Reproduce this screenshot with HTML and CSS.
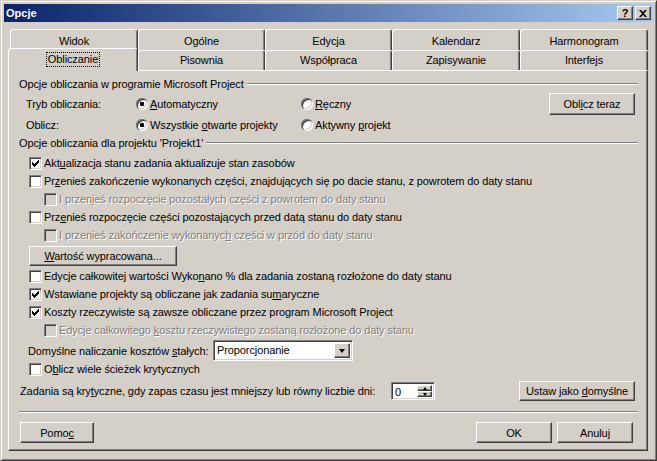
FILE: index.html
```html
<!DOCTYPE html>
<html lang="pl">
<head>
<meta charset="utf-8">
<title>Opcje</title>
<link rel="stylesheet" href="styles.css">
</head>
<body>
<div class="window">
  <div class="titlebar">
    <span class="title">Opcje</span>
    <div class="capbtns">
      <span class="capbtn help">?</span>
      <span class="capbtn close"><svg width="8" height="7" viewBox="0 0 8 7"><path d="M0 0h2l2 2 2-2h2L5 3.5 8 7H6L4 5 2 7H0l3-3.5z" fill="#000"/></svg></span>
    </div>
  </div>
  <div class="client">
    <div class="tabs">
      <div class="tabrow back">
        <div class="tab w128">Widok</div>
        <div class="tab w127">Ogólne</div>
        <div class="tab w127">Edycja</div>
        <div class="tab w128">Kalendarz</div>
        <div class="tab w128">Harmonogram</div>
      </div>
      <div class="tabrow front">
        <div class="tab sel"><span class="focus">Obliczanie</span></div>
        <div class="tab w127">Pisownia</div>
        <div class="tab w127">Współpraca</div>
        <div class="tab w128">Zapisywanie</div>
        <div class="tab w128">Interfejs</div>
      </div>
    </div>
    <div class="panel">
      <div class="group"><span>Opcje obliczania w programie Microsoft Project</span><span class="rule"></span></div>
      <div class="row r-tryb">
        <span class="lbl">Tryb obliczania:</span>
        <span class="opt"><span class="radio on"></span><span class="otext"><u>A</u>utomatyczny</span></span>
        <span class="opt"><span class="radio"></span><span class="otext"><u>R</u>ęczny</span></span>
        <span class="btn b-teraz"><span>Obl<u>i</u>cz teraz</span></span>
      </div>
      <div class="row r-oblicz">
        <span class="lbl">Oblicz:</span>
        <span class="opt"><span class="radio on"></span><span class="otext">Wszystkie <u>o</u>twarte projekty</span></span>
        <span class="opt"><span class="radio"></span><span class="otext">Aktywny <u>p</u>rojekt</span></span>
      </div>
      <div class="group g2"><span>Opcje obliczania dla projektu 'Projekt1'</span><span class="rule"></span></div>
      <div class="checks first">
        <div class="chk"><span class="box on"></span><span class="ctext">Akt<u>u</u>alizacja stanu zadania aktualizuje stan zasobów</span></div>
        <div class="chk"><span class="box"></span><span class="ctext">Pr<u>z</u>enieś zakończenie wykonanych części, znajdujących się po dacie stanu, z powrotem do daty stanu</span></div>
        <div class="chk sub dis"><span class="box"></span><span class="ctext">I przen<u>i</u>eś rozpoczęcie pozostałych części z powrotem do daty stanu</span></div>
        <div class="chk"><span class="box"></span><span class="ctext">Prz<u>e</u>nieś rozpoczęcie części pozostających przed datą stanu do daty stanu</span></div>
        <div class="chk sub dis"><span class="box"></span><span class="ctext">I przenieś zakończenie wykonanyc<u>h</u> części w przód do daty stanu</span></div>
      </div>
      <span class="btn b-wartosc"><span><u>W</u>artość wypracowana...</span></span>
      <div class="checks second">
        <div class="chk"><span class="box"></span><span class="ctext">Edycje całkowitej wartości Wyko<u>n</u>ano % dla zadania zostaną rozłożone do daty stanu</span></div>
        <div class="chk"><span class="box on"></span><span class="ctext">Wstawiane projekty są obliczane jak zadania su<u>m</u>aryczne</span></div>
        <div class="chk"><span class="box on"></span><span class="ctext">Koszty rzeczywiste są zawsze obliczane przez program Microsoft Project</span></div>
        <div class="chk sub dis"><span class="box"></span><span class="ctext">Edycje całkowitego <u>k</u>osztu rzeczywistego zostaną rozłożone do daty stanu</span></div>
      </div>
      <div class="row r-koszt">
        <span class="klbl">Domyślne naliczanie kosztów <u>s</u>tałych:</span>
        <span class="combo"><span class="ctxt">Proporcjonanie</span><span class="dropbtn"><span class="tri-down"></span></span></span>
      </div>
      <div class="chk wiele"><span class="box"></span><span class="ctext">O<u>b</u>licz wiele ścieżek krytycznych</span></div>
      <div class="row r-zadania">
        <span class="zlbl">Zadania są kry<u>t</u>yczne, gdy zapas czasu jest mniejszy lub równy liczbie dni:</span>
        <span class="spin"><span class="stxt">0</span><span class="sbtns"><span class="sbtn"><span class="tri-up-s"></span></span><span class="sbtn"><span class="tri-down-s"></span></span></span></span>
        <span class="btn b-ustaw"><span>Ustaw jako <u>d</u>omyślne</span></span>
      </div>
      <div class="sep"></div>
      <div class="row r-buttons">
        <span class="btn b-pomoc"><span>Pomo<u>c</u></span></span>
        <span class="btn b-ok"><span>OK</span></span>
        <span class="btn b-anuluj"><span>Anuluj</span></span>
      </div>
    </div>
  </div>
</div>
</body>
</html>
```
FILE: styles.css
```css
* { box-sizing: border-box; }
html, body { margin: 0; padding: 0; background: #D4D0C8; }
body {
  font-family: "Liberation Sans", Arial, sans-serif;
  font-size: 11px;
  letter-spacing: -0.1px;
  color: #000;
  line-height: 14px;
}
u { text-decoration: underline; text-underline-offset: 1px; }

.window {
  width: 657px;
  height: 461px;
  background: #D4D0C8;
  border: 1px solid;
  border-color: #D4D0C8 #404040 #404040 #D4D0C8;
  box-shadow: inset 1px 1px #fff, inset -1px -1px #808080;
  padding: 3px;
  display: flex;
  flex-direction: column;
}

.titlebar {
  height: 18px;
  background: linear-gradient(to right, #0A246A, #A6CAF0);
  display: flex;
  align-items: center;
  padding-left: 2px;
}
.title { color: #fff; font-weight: bold; letter-spacing: 0; flex: 1; }
.capbtns { display: flex; margin-right: 2px; }
.capbtn {
  width: 16px;
  height: 14px;
  background: #D4D0C8;
  border: 1px solid;
  border-color: #fff #404040 #404040 #fff;
  box-shadow: inset -1px -1px #808080;
  display: flex;
  align-items: center;
  justify-content: center;
  font-weight: bold;
  font-size: 11px;
  line-height: 12px;
  letter-spacing: 0;
}
.capbtn.help { margin-right: 2px; padding-bottom: 1px; }
.capbtn svg { display: block; }

.client {
  flex: 1;
  padding: 7px 5px 6px 4px;
  display: flex;
  flex-direction: column;
}

.tabrow { display: flex; }
.tabrow.back { height: 21px; padding-left: 2px; }
.tabrow.front { height: 20px; }
.tab {
  flex: none;
  border: 1px solid;
  border-bottom: none;
  border-color: #fff #404040 transparent #fff;
  box-shadow: inset -1px 0 #808080;
  border-radius: 3px 3px 0 0;
  text-align: center;
  background: #D4D0C8;
}
.back .tab { padding-top: 4px; }
.front .tab { padding-top: 2px; }
.w127 { width: 127px; }
.w128 { width: 128px; }
.tab.sel {
  width: 130px;
  margin-top: -2px;
  margin-bottom: -1px;
  padding-top: 3px;
  position: relative;
  z-index: 1;
}
.focus {
  display: inline-block;
  outline: 1px dotted #000;
  padding: 0 1px;
  line-height: 13px;
}

.panel {
  flex: 1;
  border: 1px solid;
  border-color: #fff #404040 #404040 #fff;
  box-shadow: inset -1px -1px #808080;
  padding: 6px 9px 0 10px;
  display: flex;
  flex-direction: column;
  align-items: stretch;
}

.group { display: flex; align-items: center; height: 14px; }
.group .rule {
  flex: 1;
  height: 2px;
  margin-left: 3px;
  border-top: 1px solid #808080;
  border-bottom: 1px solid #fff;
}
.group.g2 { margin-top: 1px; }

.row { display: flex; align-items: center; }
.r-tryb { height: 22px; margin-top: 2px; }
.r-oblicz { height: 20px; }
.lbl { width: 117px; padding-left: 7px; }
.opt { display: flex; align-items: center; width: 165px; }
.otext { margin-left: 2px; }
.radio {
  width: 12px;
  height: 12px;
  border-radius: 50%;
  background: #fff;
  box-shadow: inset 1px 1px #808080, inset 2px 2px #404040, inset -1px -1px #fff, inset -2px -2px #D4D0C8;
  display: flex;
  align-items: center;
  justify-content: center;
}
.radio.on::after {
  content: "";
  width: 4px;
  height: 4px;
  background: #000;
  border-radius: 1px;
}

.btn {
  display: flex;
  align-items: center;
  justify-content: center;
  background: #D4D0C8;
  border: 1px solid;
  border-color: #fff #404040 #404040 #fff;
  box-shadow: inset -1px -1px #808080;
  flex: none;
  white-space: nowrap;
}
.b-teraz { width: 86px; height: 22px; margin-left: auto; margin-right: 3px; }

.checks.first { margin-top: 4px; }
.checks.second { margin-top: 1px; }
.chk { display: flex; align-items: center; height: 18px; padding-left: 10px; }
.chk.sub { padding-left: 25px; }
.box {
  width: 13px;
  height: 13px;
  flex: none;
  background: #fff;
  border: 1px solid;
  border-color: #808080 #fff #fff #808080;
  box-shadow: inset 1px 1px #404040, inset -1px -1px #D4D0C8;
  display: flex;
  align-items: center;
  justify-content: center;
}
.box.on::after {
  content: "";
  width: 7px;
  height: 7px;
  background: no-repeat center/7px 7px url("data:image/svg+xml,%3Csvg xmlns='http://www.w3.org/2000/svg' width='7' height='7' viewBox='0 0 7 7'%3E%3Cpath d='M0 2h1v1h1v1h1V3h1V2h1V1h1V0h1v3H6v1H5v1H4v1H3v1H2V6H1V5H0z' fill='%23000'/%3E%3C/svg%3E");
}
.dis .box { background: #D4D0C8; }
.ctext { margin-left: 2px; white-space: nowrap; }
.dis .ctext { color: #808080; text-shadow: 1px 1px 0 #fff; }

.b-wartosc { width: 148px; height: 20px; margin-top: 2px; margin-left: 10px; align-self: flex-start; }

.r-koszt { height: 21px; margin-top: 1px; }
.klbl { width: 194px; padding-left: 9px; }
.combo {
  width: 140px;
  height: 21px;
  background: #fff;
  border: 1px solid;
  border-color: #808080 #fff #fff #808080;
  box-shadow: inset 1px 1px #404040, inset -1px -1px #D4D0C8;
  display: flex;
  align-items: stretch;
  padding: 2px;
}
.ctxt { flex: 1; padding-left: 1px; line-height: 15px; }
.dropbtn {
  width: 16px;
  background: #D4D0C8;
  border: 1px solid;
  border-color: #fff #404040 #404040 #fff;
  box-shadow: inset -1px -1px #808080;
  display: flex;
  align-items: center;
  justify-content: center;
}
.tri-down {
  width: 0; height: 0;
  border-left: 3.5px solid transparent;
  border-right: 3.5px solid transparent;
  border-top: 4px solid #000;
}

.chk.wiele { height: 16px; }

.r-zadania { height: 20px; margin-top: 4px; }
.zlbl { width: 372px; padding-left: 1px; white-space: nowrap; }
.spin {
  width: 44px;
  height: 18px;
  background: #fff;
  border: 1px solid;
  border-color: #808080 #fff #fff #808080;
  box-shadow: inset 1px 1px #404040, inset -1px -1px #D4D0C8;
  display: flex;
  padding: 2px;
}
.stxt { flex: 1; line-height: 14px; padding-left: 1px; }
.sbtns { width: 15px; display: flex; flex-direction: column; }
.sbtn {
  flex: 1;
  background: #D4D0C8;
  border: 1px solid;
  border-color: #fff #404040 #404040 #fff;
  box-shadow: inset -1px -1px #808080;
  display: flex;
  align-items: center;
  justify-content: center;
}
.tri-up-s {
  width: 0; height: 0;
  border-left: 2.5px solid transparent;
  border-right: 2.5px solid transparent;
  border-bottom: 3px solid #000;
}
.tri-down-s {
  width: 0; height: 0;
  border-left: 2.5px solid transparent;
  border-right: 2.5px solid transparent;
  border-top: 3px solid #000;
}
.b-ustaw { width: 116px; height: 20px; margin-left: auto; margin-right: 3px; }

.sep {
  height: 2px;
  margin-top: 10px;
  border-top: 1px solid #808080;
  border-bottom: 1px solid #fff;
}

.r-buttons { height: 21px; margin-top: 9px; }
.b-pomoc { width: 74px; height: 21px; margin-left: 1px; }
.b-ok { width: 76px; height: 21px; margin-left: auto; }
.b-anuluj { width: 76px; height: 21px; margin-left: 5px; margin-right: 5px; }
```
